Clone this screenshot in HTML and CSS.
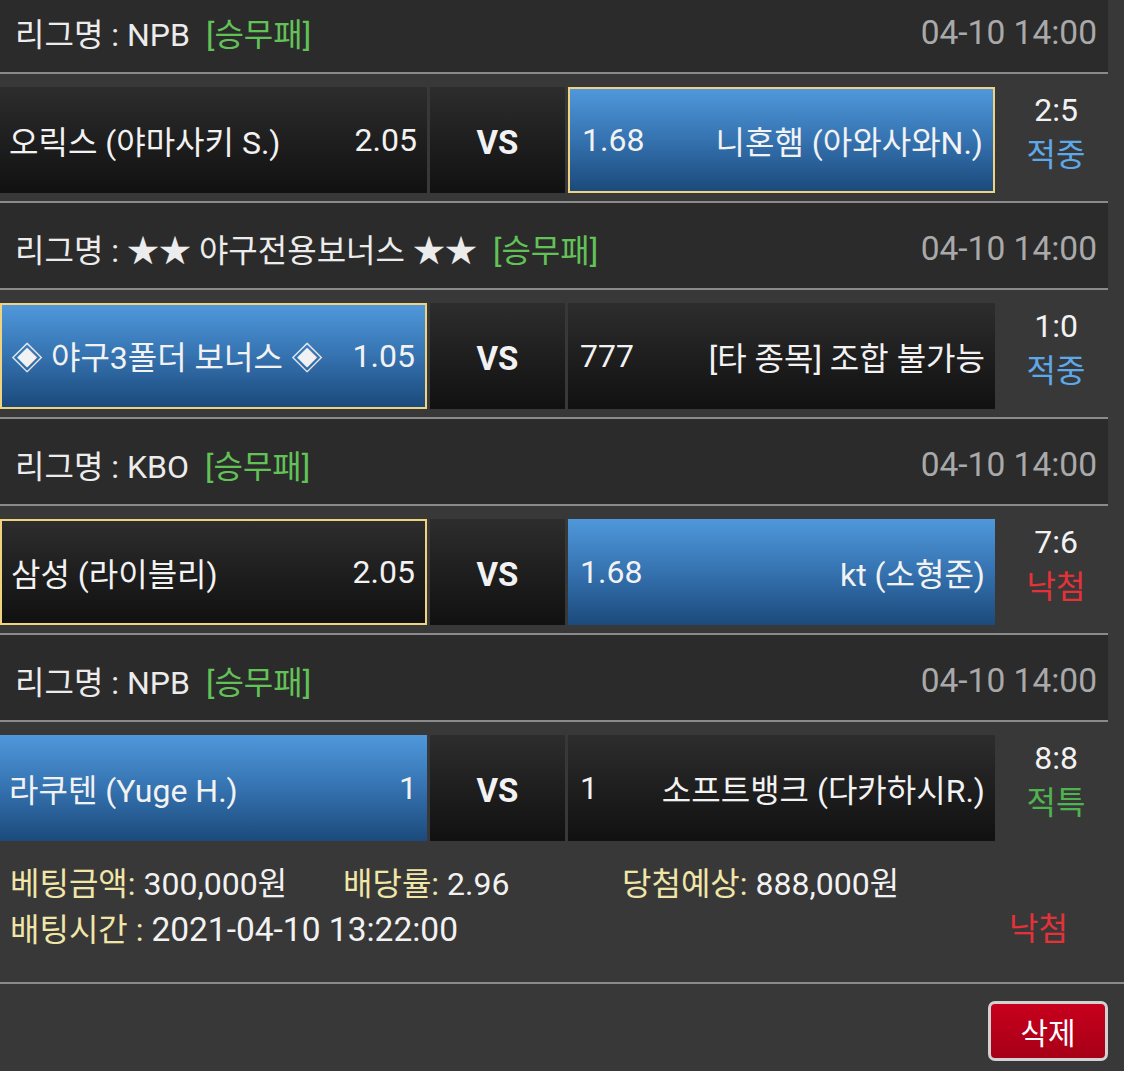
FILE: index.html
```html
<!DOCTYPE html>
<html lang="ko">
  <head>
    <meta charset="UTF-8" />
    <meta name="viewport" content="width=device-width, initial-scale=1.0" />
    <title>베팅내역</title>
    <link rel="stylesheet" href="styles.css">
  </head>

  <body>
    <div class="slip">
      <div class="games">
        <div class="game">
          <div class="league">
            <span class="league-name">리그명 : NPB</span>
            <span class="market">[승무패]</span>
            <span class="time">04-10 14:00</span>
          </div>
          <div class="match">
            <div class="pick home">
              <span class="team">오릭스 (야마사키 S.)</span>
              <span class="odds">2.05</span>
            </div>
            <div class="vs">VS</div>
            <div class="pick away blue selected">
              <span class="odds">1.68</span>
              <span class="team">니혼햄 (아와사와N.)</span>
            </div>
            <div class="result">
              <div class="score">2:5</div>
              <div class="status hit">적중</div>
            </div>
          </div>
        </div>

        <div class="game">
          <div class="league">
            <span class="league-name">리그명 : ★★ 야구전용보너스 ★★</span>
            <span class="market">[승무패]</span>
            <span class="time">04-10 14:00</span>
          </div>
          <div class="match">
            <div class="pick home blue selected">
              <span class="team">◈ 야구3폴더 보너스 ◈</span>
              <span class="odds">1.05</span>
            </div>
            <div class="vs">VS</div>
            <div class="pick away">
              <span class="odds">777</span>
              <span class="team">[타 종목] 조합 불가능</span>
            </div>
            <div class="result">
              <div class="score">1:0</div>
              <div class="status hit">적중</div>
            </div>
          </div>
        </div>

        <div class="game">
          <div class="league">
            <span class="league-name">리그명 : KBO</span>
            <span class="market">[승무패]</span>
            <span class="time">04-10 14:00</span>
          </div>
          <div class="match">
            <div class="pick home selected">
              <span class="team">삼성 (라이블리)</span>
              <span class="odds">2.05</span>
            </div>
            <div class="vs">VS</div>
            <div class="pick away blue">
              <span class="odds">1.68</span>
              <span class="team">kt (소형준)</span>
            </div>
            <div class="result">
              <div class="score">7:6</div>
              <div class="status miss">낙첨</div>
            </div>
          </div>
        </div>

        <div class="game">
          <div class="league">
            <span class="league-name">리그명 : NPB</span>
            <span class="market">[승무패]</span>
            <span class="time">04-10 14:00</span>
          </div>
          <div class="match">
            <div class="pick home blue">
              <span class="team">라쿠텐 (Yuge H.)</span>
              <span class="odds">1</span>
            </div>
            <div class="vs">VS</div>
            <div class="pick away">
              <span class="odds">1</span>
              <span class="team">소프트뱅크 (다카하시R.)</span>
            </div>
            <div class="result">
              <div class="score">8:8</div>
              <div class="status special">적특</div>
            </div>
          </div>
        </div>
      </div>

      <div class="summary">
        <div class="summary-row">
          <div class="field"><span class="label">베팅금액:</span> 300,000원</div>
          <div class="field"><span class="label">배당률:</span> 2.96</div>
          <div class="field"><span class="label">당첨예상:</span> 888,000원</div>
        </div>
        <div class="summary-row split">
          <div class="field"><span class="label">배팅시간 :</span> <span class="bet-time">2021-04-10 13:22:00</span></div>
          <div class="status miss">낙첨</div>
        </div>
      </div>

      <div class="actions">
        <button class="btn-delete">삭제</button>
      </div>
    </div>
  </body>
</html>
```

FILE: styles.css
```css
* {
  margin: 0;
  padding: 0;
  box-sizing: border-box;
}

body {
  font-family: 'Roboto', 'Noto Sans CJK KR', sans-serif;
  font-size: 32px;
  background: #383838;
  color: #f2f2f2;
  overflow: hidden;
}

.slip {
  width: 1124px;
}

.games {
  width: 1108px;
  margin-top: -13px;
}

/* 리그 헤더 */
.league {
  display: flex;
  align-items: center;
  height: 87px;
  padding: 5px 11px 0 15px;
  background: #2b2b2b;
  border-bottom: 2px solid #8a8a8a;
  color: #ececec;
}

.market {
  margin-left: 16px;
  color: #62c257;
}

.time {
  margin-left: auto;
  font-size: 33.5px;
  color: #a9a9a9;
}

/* 경기 */
.match {
  display: grid;
  grid-template-columns: 427px 135px 427px 1fr;
  column-gap: 3px;
  height: 129px;
  padding: 13px 0 8px;
  border-bottom: 2px solid #8a8a8a;
}

.game:last-child .match {
  border-bottom: none;
  height: 127px;
}

.pick,
.vs {
  display: flex;
  align-items: center;
  background: linear-gradient(to bottom, #2d2d2d 0%, #1d1d1d 55%, #111 100%);
}

.pick {
  justify-content: space-between;
  white-space: nowrap;
}

.pick.home {
  padding: 0 10px 0 9px;
}

.pick.away {
  padding: 0 10px 0 12px;
}

.pick.blue {
  background: linear-gradient(to bottom, #4f98db 0%, #3572b0 50%, #1b4a7b 100%);
}

.pick.selected {
  border: 2px solid #f0d37e;
}

.vs {
  justify-content: center;
  font-weight: 700;
  font-size: 33px;
  padding-top: 4px;
}

.result {
  padding: 1px 0 0 6px;
  text-align: center;
  line-height: 45px;
}

.status.hit {
  color: #5ea8e8;
}

.status.miss {
  color: #e53238;
}

.status.special {
  color: #4fb34f;
}

/* 베팅 요약 */
.summary {
  padding: 13px 56px 29px 10px;
  border-bottom: 2px solid #8a8a8a;
  line-height: 45px;
}

.summary-row {
  display: grid;
  grid-template-columns: 333px 279px 1fr;
}

.summary-row.split {
  display: flex;
  justify-content: space-between;
}

.bet-time {
  font-size: 33.5px;
}

.label {
  color: #f0e6a8;
}

.actions {
  display: flex;
  justify-content: flex-end;
  padding: 17px 16px 11px;
}

.btn-delete {
  width: 120px;
  height: 60px;
  font-family: inherit;
  font-size: 30px;
  color: #fff;
  background: linear-gradient(to bottom, #c8001d, #a60017);
  border: 3px solid #d2d2d2;
  border-radius: 7px;
  cursor: pointer;
}
```
